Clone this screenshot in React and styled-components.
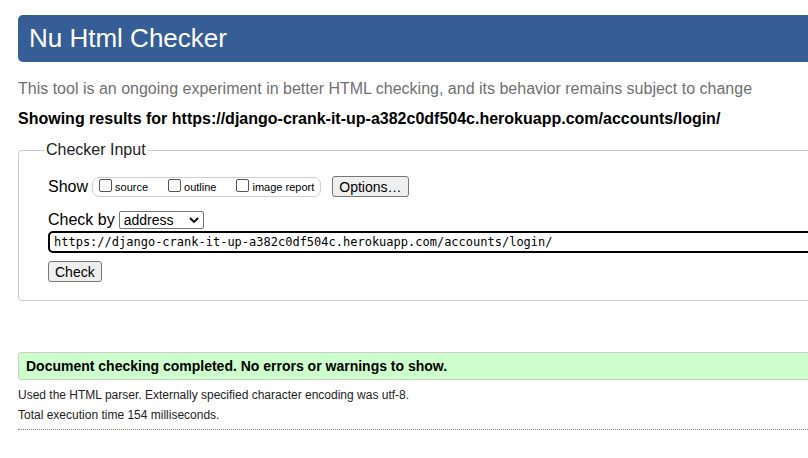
import React from "react";
import styled, { createGlobalStyle } from "styled-components";

const GlobalStyle = createGlobalStyle`
  body {
    margin: 0;
    font-family: "Liberation Sans", Arial, sans-serif;
    background: #fff;
    color: #000;
    overflow: hidden;
  }
`;

const Page = styled.div`
  width: 880px;
  padding: 15px 0 0 18px;
`;

const Header = styled.h1`
  margin: 0;
  height: 47px;
  line-height: 47px;
  padding-left: 11px;
  background-color: #365d96;
  border-radius: 5px;
  color: #fff;
  font-size: 26px;
  font-weight: normal;
`;

const Intro = styled.p`
  margin: 18px 0 0;
  font-size: 16px;
  line-height: 18px;
  color: #707070;
`;

const Results = styled.p`
  margin: 12px 0 0;
  font-size: 16px;
  line-height: 18px;
  font-weight: bold;
`;

const Fieldset = styled.fieldset`
  margin: 13px 0 0;
  padding: 6px 29px 18px;
  border: 1px solid #cccccc;
  border-radius: 4px;
`;

const Legend = styled.legend`
  padding: 0 2px;
  margin-left: -4px;
  font-size: 16px;
  color: #222;
`;

const Row = styled.div`
  display: flex;
  align-items: center;
  gap: 4px;
  font-size: 16px;
  margin-top: ${(p) => p.$top || 0}px;
`;

const CheckGroup = styled.span`
  display: inline-flex;
  align-items: center;
  height: 18px;
  padding: 0 6px 0 6px;
  border: 1px solid #cfcfcf;
  border-radius: 7px;
  gap: 20px;
`;

const Opt = styled.label`
  display: inline-flex;
  align-items: center;
  font-size: 11px;
  gap: 3px;
`;

const Box = styled.span`
  width: 13px;
  height: 13px;
  margin-top: -3px;
  border: 1px solid #555;
  border-radius: 2px;
  box-sizing: border-box;
  background: #fff;
`;

const Button = styled.button`
  font-family: "Liberation Sans", Arial, sans-serif;
  font-size: ${(p) => p.$size || 14}px;
  height: 21px;
  padding: 0 ${(p) => p.$pad || 6}px;
  background: #efefef;
  border: 1px solid #767676;
  border-radius: 3px;
  color: #000;
  margin-left: ${(p) => p.$left || 0}px;
`;

const Select = styled.span`
  display: inline-flex;
  align-items: center;
  justify-content: space-between;
  width: 85px;
  height: 18px;
  box-sizing: border-box;
  padding: 0 4px 0 4px;
  border: 1px solid #767676;
  border-radius: 2px;
  font-size: 14px;
`;

const UrlInput = styled.div`
  margin-top: 2px;
  height: 22px;
  box-sizing: border-box;
  border: 2px solid #000;
  border-radius: 5px;
  padding-left: 4px;
  display: flex;
  align-items: center;
  font-family: "DejaVu Sans Mono", Consolas, monospace;
  font-size: 12px;
  color: #000;
`;

const Success = styled.div`
  margin-top: 51px;
  height: 28px;
  box-sizing: border-box;
  background: #ccffcc;
  border: 1px solid #cccccc;
  border-radius: 3px;
  padding-left: 7px;
  display: flex;
  align-items: center;
  font-size: 14px;
  font-weight: bold;
`;

const Info = styled.p`
  margin: ${(p) => p.$top || 0}px 0 0;
  font-size: 12px;
  line-height: 14px;
  color: #222;
`;

const Rule = styled.hr`
  margin: 7px 0 0;
  border: 0;
  border-top: 1px dotted #888;
`;

const Caret = () => (
  <svg width="10" height="6" viewBox="0 0 10 6">
    <path d="M1 1l4 4 4-4" fill="none" stroke="#000" strokeWidth="1.8" />
  </svg>
);

const App = () => {
  const url = "https://django-crank-it-up-a382c0df504c.herokuapp.com/accounts/login/";
  return (
    <Page>
      <GlobalStyle />
      <Header>Nu Html Checker</Header>
      <Intro>
        This tool is an ongoing experiment in better HTML checking, and its behavior remains subject to change
      </Intro>
      <Results>Showing results for {url}</Results>
      <Fieldset>
        <Legend>Checker Input</Legend>
        <Row $top={11}>
          Show
          <CheckGroup>
            <Opt>
              <Box />
              source
            </Opt>
            <Opt>
              <Box />
              outline
            </Opt>
            <Opt>
              <Box />
              image report
            </Opt>
          </CheckGroup>
          <Button $size={14} $pad={6} $left={7}>
            Options…
          </Button>
        </Row>
        <Row $top={14}>
          Check by
          <Select>
            address
            <Caret />
          </Select>
        </Row>
        <UrlInput>{url}</UrlInput>
        <Row $top={8}>
          <Button>Check</Button>
        </Row>
      </Fieldset>
      <Success>Document checking completed. No errors or warnings to show.</Success>
      <Info $top={8}>Used the HTML parser. Externally specified character encoding was utf-8.</Info>
      <Info $top={6}>Total execution time 154 milliseconds.</Info>
      <Rule />
    </Page>
  );
};

export default App;
